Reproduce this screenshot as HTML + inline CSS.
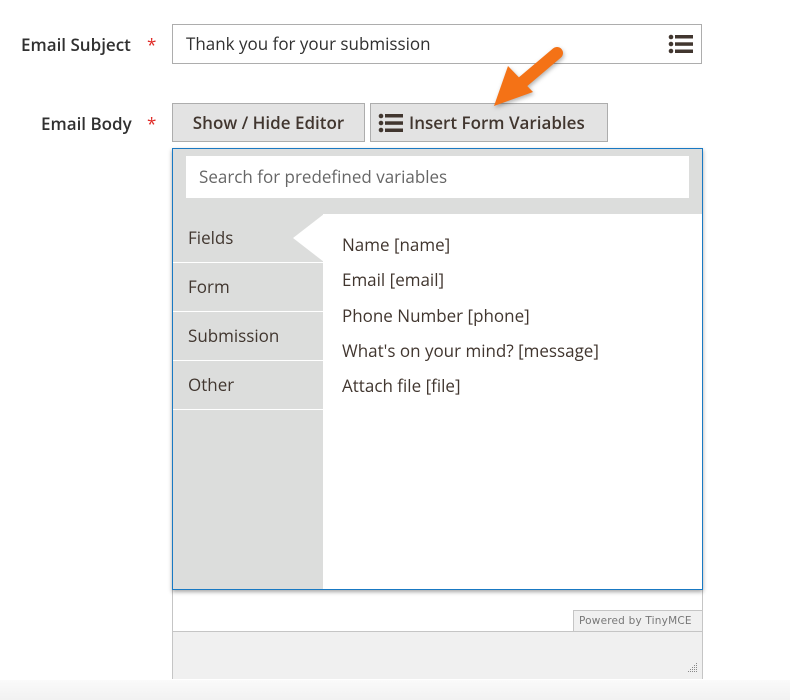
<!DOCTYPE html>
<html><head><style>
body{margin:0;width:790px;height:700px;background:#fff;font-family:"Open Sans","DejaVu Sans","Liberation Sans",sans-serif;color:#303030;position:relative;overflow:hidden}
.a{position:absolute}
.lbl{font-weight:600;font-size:17px;color:#303030}
.star{color:#e02b27;font-size:17px}
.btn{background:#e3e3e3;border:1px solid #adadad;box-sizing:border-box;font-size:17px;font-weight:600;color:#41362f;display:flex;align-items:center}
.tab{left:0;width:150px;height:49px;border-bottom:1px solid #fff;font-size:17px;color:#41362f;padding-left:15px;box-sizing:border-box;line-height:48px}
.it{left:169px;font-size:17px;color:#41362f}
</style></head><body>
<div class="a" style="left:0;top:680px;width:790px;height:20px;background:linear-gradient(#fafafa,#f2f2f2)"></div>
<div class="a lbl" style="left:21px;top:33px">Email Subject</div>
<div class="a star" style="left:147px;top:33px">*</div>
<div class="a" style="left:172px;top:24px;width:530px;height:40px;border:1px solid #adadad;box-sizing:border-box"></div>
<div class="a" style="left:186px;top:32px;font-size:17px;color:#303030">Thank you for your submission</div>
<svg class="a" style="left:668px;top:34px" width="26" height="20"><g fill="#41362f"><circle cx="3" cy="3" r="2.3"/><circle cx="3" cy="10" r="2.3"/><circle cx="3" cy="17" r="2.3"/><rect x="7" y="1" width="18" height="3.5"/><rect x="7" y="8.3" width="18" height="3.5"/><rect x="7" y="15.5" width="18" height="3.5"/></g></svg>
<div class="a lbl" style="left:41px;top:112px">Email Body</div>
<div class="a star" style="left:147px;top:112px">*</div>
<div class="a" style="left:172px;top:148px;width:531px;height:531px;border:1px solid #c5c5c5;box-sizing:border-box;background:#fff"></div>
<div class="a" style="left:173px;top:631px;width:529px;height:47px;background:#f0f0f0;border-top:1px solid #c5c5c5"></div>
<div class="a" style="left:573px;top:610px;width:129px;height:21px;background:#f0f0f0;border-left:1px solid #c5c5c5;border-top:1px solid #c5c5c5;box-sizing:border-box;font-family:'DejaVu Sans',sans-serif;font-size:10.5px;color:#777;line-height:20px;padding-left:5px;letter-spacing:0.2px">Powered by TinyMCE</div>
<svg class="a" style="left:688px;top:663px" width="10" height="10"><g fill="#888"><rect x="8" y="0" width="1" height="1"/><rect x="6" y="2" width="1" height="1"/><rect x="8" y="2" width="1" height="1"/><rect x="4" y="4" width="1" height="1"/><rect x="6" y="4" width="1" height="1"/><rect x="8" y="4" width="1" height="1"/><rect x="2" y="6" width="1" height="1"/><rect x="4" y="6" width="1" height="1"/><rect x="6" y="6" width="1" height="1"/><rect x="8" y="6" width="1" height="1"/><rect x="0" y="8" width="1" height="1"/><rect x="2" y="8" width="1" height="1"/><rect x="4" y="8" width="1" height="1"/><rect x="6" y="8" width="1" height="1"/><rect x="8" y="8" width="1" height="1"/></g></svg>
<div class="a btn" style="left:172px;top:103px;width:193px;height:39px;justify-content:center">Show / Hide Editor</div>
<div class="a btn" style="left:370px;top:103px;width:238px;height:39px;padding-left:7px">
<svg width="26" height="20" style="margin-right:5px"><g fill="#41362f"><circle cx="3" cy="3" r="2.3"/><circle cx="3" cy="10" r="2.3"/><circle cx="3" cy="17" r="2.3"/><rect x="7" y="1" width="18" height="3.5"/><rect x="7" y="8.3" width="18" height="3.5"/><rect x="7" y="15.5" width="18" height="3.5"/></g></svg>Insert Form Variables</div>
<div class="a" style="left:172px;top:148px;width:531px;height:442px;border:1px solid #1979c3;box-sizing:border-box;background:#dcdddc;box-shadow:0 2px 4px rgba(0,0,0,.35)">
<div class="a" style="left:13px;top:7px;width:503px;height:42px;background:#fff;font-size:17px;color:#666;line-height:42px;padding-left:13px;box-sizing:border-box">Search for predefined variables</div>
<div class="a" style="left:150px;top:65px;width:379px;height:375px;background:#fff"></div>
<div class="a tab" style="top:65px">Fields</div>
<div class="a tab" style="top:114px">Form</div>
<div class="a tab" style="top:163px">Submission</div>
<div class="a tab" style="top:212px">Other</div>
<svg class="a" style="left:120px;top:65px" width="31" height="48"><polygon points="31,0 0,24 31,48" fill="#fff"/></svg>
<div class="a it" style="top:84px">Name [name]</div>
<div class="a it" style="top:119px">Email [email]</div>
<div class="a it" style="top:155px">Phone Number [phone]</div>
<div class="a it" style="top:190px">What's on your mind? [message]</div>
<div class="a it" style="top:225px">Attach file [file]</div>
</div>
<svg class="a" style="left:480px;top:36px" width="100" height="84"><g style="filter:drop-shadow(1px 2px 2px rgba(0,0,0,.3))"><line x1="77" y1="17" x2="38" y2="50" stroke="#f47216" stroke-width="12" stroke-linecap="round"/><polygon points="14,70 28,30 53,56" fill="#f47216"/></g></svg>
</body></html>
